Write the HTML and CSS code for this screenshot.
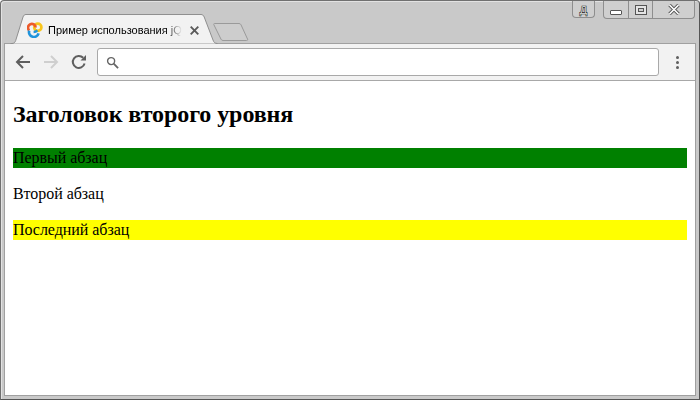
FILE: index.html
```html
<!DOCTYPE html>
<html lang="ru">
<head>
<meta charset="utf-8">
<title>Пример использования jQuery</title>
<link rel="stylesheet" href="styles.css">
</head>
<body>
<div class="window">
  <div class="strip">
    <div class="tab">
      <svg class="tab-shape" width="208" height="30" viewBox="0 0 208 30"><path d="M0.5 29.5H2C4 29.5 5 28.5 5.7 26.5L13 3C13.6 1.3 14.6 0.5 16 0.5H191C192.5 0.5 193.5 1.3 194.2 3L203 26C203.8 28.5 205 29.5 207.5 29.5" fill="#f2f2f2" stroke="#8f8f8f"/></svg>
      <svg class="favicon" width="16" height="16" viewBox="0 0 16 16"><circle cx="10.8" cy="5.2" r="3.6" fill="none" stroke="#f8c51c" stroke-width="2.7"/><path d="M2.2 8.4A3.8 3.8 0 1 1 8.6 5.6" fill="none" stroke="#ec5a2a" stroke-width="2.7"/><path d="M2.2 8.6A4.8 4.8 0 0 0 11.6 11.4M6.6 10C8.2 10 9.4 9.4 10.4 8.4" fill="none" stroke="#1e94dc" stroke-width="2.7"/></svg>
      <span class="tab-title">Пример использования jQuery</span>
      <svg class="tab-close" width="9" height="9" viewBox="0 0 9 9"><path d="M.7 .7L8.3 8.3M8.3 .7L.7 8.3" stroke="#5a5a5a" stroke-width="1.9"/></svg>
    </div>
    <svg class="newtab" width="36" height="20" viewBox="0 0 36 20"><path d="M1.5 1.5H26C27 1.5 27.6 2 28 2.8L34.5 17C35 18 34.4 18.5 33.5 18.5H10C9 18.5 8.4 18 8 17.2L1 3C.5 2 .7 1.5 1.5 1.5Z" fill="#cdcdcd" stroke="#9a9a9a"/></svg>
    <div class="caption">
      <div class="cap-btn lang"><span class="lang-letter">Д</span></div>
      <div class="cap-group">
        <div class="cap-btn min"><i class="min-icon"></i></div>
        <div class="cap-btn max"><svg width="12" height="10" viewBox="0 0 12 10"><rect x=".5" y=".5" width="11" height="9" fill="#e4e4e4" stroke="#555"/><rect x="3.5" y="3.5" width="5" height="3" fill="#cfcfcf" stroke="#555"/></svg></div>
        <div class="cap-btn close"><svg width="12" height="11" viewBox="0 0 12 11"><path d="M1.5 1L10.5 10M10.5 1L1.5 10" stroke="#555" stroke-width="3.4"/><path d="M1.5 1L10.5 10M10.5 1L1.5 10" stroke="#fff" stroke-width="1.6"/></svg></div>
      </div>
    </div>
  </div>
  <div class="page">
    <div class="toolbar">
      <svg class="nav" width="16" height="16" viewBox="0 0 16 16"><path d="M15 8H2M8 2L2 8L8 14" fill="none" stroke="#5f5f5f" stroke-width="2"/></svg>
      <svg class="nav" width="16" height="16" viewBox="0 0 16 16"><path d="M1 8H14M8 2L14 8L8 14" fill="none" stroke="#cfcfcf" stroke-width="2"/></svg>
      <svg class="nav" width="16" height="16" viewBox="0 0 16 16"><path d="M13.6 9.5A6 6 0 1 1 12.2 3.8" fill="none" stroke="#5f5f5f" stroke-width="2"/><path d="M9.5 6.5H15V1Z" fill="#5f5f5f"/></svg>
      <div class="omnibox">
        <svg width="13" height="13" viewBox="0 0 14 14"><circle cx="5.5" cy="5.5" r="3.8" fill="none" stroke="#666" stroke-width="1.5"/><path d="M8.3 8.3L13 13" stroke="#666" stroke-width="2"/></svg>
      </div>
      <div class="menu"><i></i><i></i><i></i></div>
    </div>
    <div class="content">
      <h2>Заголовок второго уровня</h2>
      <p class="first">Первый абзац</p>
      <p>Второй абзац</p>
      <p class="last">Последний абзац</p>
    </div>
  </div>
</div>
</body>
</html>
```
FILE: styles.css
```css
html, body { margin: 0; padding: 0; }
body { width: 700px; height: 400px; overflow: hidden; background: #fff; }
.window {
  box-sizing: border-box; width: 700px; height: 400px;
  display: flex; flex-direction: column;
  border: 1px solid #555; border-left-color: #707070; border-top-color: #707070;
  border-radius: 4px 4px 0 0;
  background: #c9c9c9; padding: 0 3px 3px 3px;
  box-shadow: inset 1px 1px 0 #e2e2e2;
}
.strip { height: 42px; display: flex; flex: none; }
.tab {
  position: relative; z-index: 1; width: 208px; height: 30px; margin: 13px 0 0 6px; flex: none;
  display: flex; align-items: center; padding: 2px 0 0 17px; box-sizing: border-box;
}
.tab-shape { position: absolute; left: 0; top: 0; }
.favicon { position: relative; flex: none; margin: 0 5px 0 0; }
.tab-title {
  position: relative; font: 11px "Liberation Sans", Arial, sans-serif; color: #000;
  white-space: nowrap; overflow: hidden; width: 134px; flex: none;
  -webkit-mask-image: linear-gradient(to right, #000 118px, transparent 134px);
  mask-image: linear-gradient(to right, #000 118px, transparent 134px);
}
.tab-close { position: relative; flex: none; margin-left: 8px; }
.newtab { margin: 21px 0 0 -5px; flex: none; }
.caption { margin-left: auto; display: flex; align-items: flex-start; margin-right: 1px; gap: 8px; }
.cap-btn { height: 17px; display: flex; align-items: center; justify-content: center; box-sizing: border-box; }
.lang { width: 23px; border: 1px solid #8e8e8e; border-top: 0; border-radius: 0 0 4px 4px; background: #cfcfcf; }
.lang-letter { font: bold 11px/1 "Liberation Sans", sans-serif; color: #fff; -webkit-text-stroke: .6px #222; margin-top: 3px; }
.cap-group { display: flex; border: 1px solid #8e8e8e; border-top: 0; border-radius: 0 0 4px 4px; background: #cfcfcf; }
.min { width: 25px; border-right: 1px solid #8e8e8e; }
.max { width: 24px; border-right: 1px solid #8e8e8e; }
.close { width: 41px; }
.min-icon { display: block; width: 10px; height: 3px; border: 1px solid #555; background: #fff; border-radius: 1px; margin-top: 5px; }
.page {
  flex: 1; display: flex; flex-direction: column; min-height: 0;
  border: 1px solid #a0a0a0;
}
.toolbar {
  height: 37px; flex: none; display: flex; align-items: center;
  background: #f2f2f2; border-bottom: 1px solid #a8a8a8;
  padding: 0 0 0 10px; box-sizing: border-box;
}
.nav { flex: none; margin-right: 12px; }
.omnibox {
  flex: none; width: 562px; height: 28px; margin-left: -2px; box-sizing: border-box;
  background: #fff; border: 1px solid #a9a9a9; border-radius: 3px;
  display: flex; align-items: center; padding-left: 8px;
}
.menu { display: flex; flex-direction: column; gap: 2px; margin-left: 17px; }
.menu i { display: block; width: 3px; height: 3px; border-radius: 50%; background: #5f5f5f; }
.content {
  flex: 1; background: #fff; padding: 0 8px; overflow: hidden;
  font: 16px/20px "Liberation Serif", "Times New Roman", serif; color: #000;
}
h2 { font-size: 24px; line-height: 27px; margin: 20px 0; font-weight: bold; letter-spacing: -0.08px; }
p { margin: 16px 0; height: 20px; letter-spacing: -0.05px; }
.first { background: #008000; }
.last { background: #ffff00; }
```
